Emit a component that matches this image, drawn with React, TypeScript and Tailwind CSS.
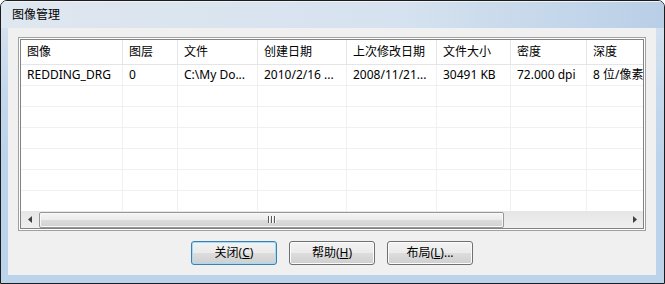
import React from "react";

const cols = [102, 55, 80, 89, 90, 74, 76, 140];
const headers = ["图像", "图层", "文件", "创建日期", "上次修改日期", "文件大小", "密度", "深度"];
const row1 = ["REDDING_DRG", "0", "C:\\My Do...", "2010/2/16 ...", "2008/11/21...", "30491 KB", "72.000 dpi", "8 位/像素"];

function Row({ cells, header }: { cells: string[]; header?: boolean }) {
  return (
    <div className={header ? "flex h-[25px] border-b border-[#e5e5e5] bg-white" : "flex h-[21px] shrink-0 border-b border-[#f0f0f0]"}>
      {cols.map((w, i) => (
        <div
          key={i}
          style={{ width: w }}
          className={
            "shrink-0 h-full flex items-center pl-[6px] whitespace-nowrap overflow-hidden border-r " +
            (header ? "border-[#e5e5e5]" : "border-[#f0f0f0]")
          }
        >
          {cells[i]}
        </div>
      ))}
    </div>
  );
}

function Btn({ label, k, rest, def }: { label: string; k: string; rest?: string; def?: boolean }) {
  return (
    <div
      className={
        "w-[86px] h-[24px] rounded-[3px] border flex items-center justify-center text-[12px] text-black bg-[linear-gradient(to_bottom,#f2f2f2_0%,#ebebeb_50%,#dddddd_50%,#cfcfcf_100%)] " +
        (def
          ? "border-[#3c7fb1] shadow-[inset_0_0_0_1px_#9fdcf6]"
          : "border-[#707070] shadow-[inset_0_0_0_1px_#fbfbfb]")
      }
    >
      <span>
        {label}(<span className="underline">{k}</span>){rest}
      </span>
    </div>
  );
}

export default function App() {
  const empty = ["", "", "", "", "", "", "", ""];
  return (
    <div className="w-[665px] h-[284px] flex flex-col border border-[#1c1c1c] rounded-t-[7px] overflow-hidden bg-[linear-gradient(to_bottom,#d9e4f0_0px,#c4d8ed_90px,#bcd3ec_160px)] font-['Noto_Sans','Noto_Sans_CJK_SC',sans-serif] text-[12px] text-black">
      <div className="h-[27px] shrink-0 flex items-center pl-[11px] bg-[linear-gradient(to_right,#dfe7f0_0%,#d6e2ef_60%,#b9cfe7_100%)] shadow-[inset_0_1px_0_#eef3f9]">
        <span className="leading-none">图像管理</span>
      </div>
      <div className="ml-[7px] w-[648px] h-[247px] shrink-0 bg-[#f0f0f0] pt-[9px] px-[10px] flex flex-col">
        <div className="w-[628px] h-[194px] border border-[#a0a0a0] bg-white p-px">
          <div className="w-full h-full border border-[#828282] bg-white flex flex-col overflow-hidden">
            <Row cells={headers} header />
            <div className="h-[146px] overflow-hidden flex flex-col">
              <Row cells={row1} />
              {[0, 1, 2, 3, 4, 5].map((i) => (
                <Row key={i} cells={empty} />
              ))}
            </div>
            <div className="h-[17px] shrink-0 flex bg-[linear-gradient(to_bottom,#e6e6e6,#efefef)]">
              <div className="w-[17px] h-full flex items-center justify-center">
                <svg width="4" height="7" viewBox="0 0 4 7">
                  <path d="M4 0 L0 3.5 L4 7 Z" fill="#404040" />
                </svg>
              </div>
              <div className="flex-1 h-full flex items-center pl-px">
                <div className="w-[465px] h-[16px] rounded-[2px] border border-[#979797] bg-[linear-gradient(to_bottom,#f5f5f5_0%,#ebebeb_50%,#dcdcdc_51%,#d2d2d2_100%)] shadow-[inset_0_0_0_1px_#f8f8f8] flex items-center justify-center gap-[2px]">
                  <div className="w-px h-[7px] bg-[#5a5a5a] shadow-[1px_0_0_#ffffff]" />
                  <div className="w-px h-[7px] bg-[#5a5a5a] shadow-[1px_0_0_#ffffff]" />
                  <div className="w-px h-[7px] bg-[#5a5a5a] shadow-[1px_0_0_#ffffff]" />
                </div>
              </div>
              <div className="w-[17px] h-full flex items-center justify-center">
                <svg width="4" height="7" viewBox="0 0 4 7">
                  <path d="M0 0 L4 3.5 L0 7 Z" fill="#404040" />
                </svg>
              </div>
            </div>
          </div>
        </div>
        <div className="mt-[10px] flex justify-center gap-[12px]">
          <Btn label="关闭" k="C" def />
          <Btn label="帮助" k="H" />
          <Btn label="布局" k="L" rest="..." />
        </div>
      </div>
    </div>
  );
}
